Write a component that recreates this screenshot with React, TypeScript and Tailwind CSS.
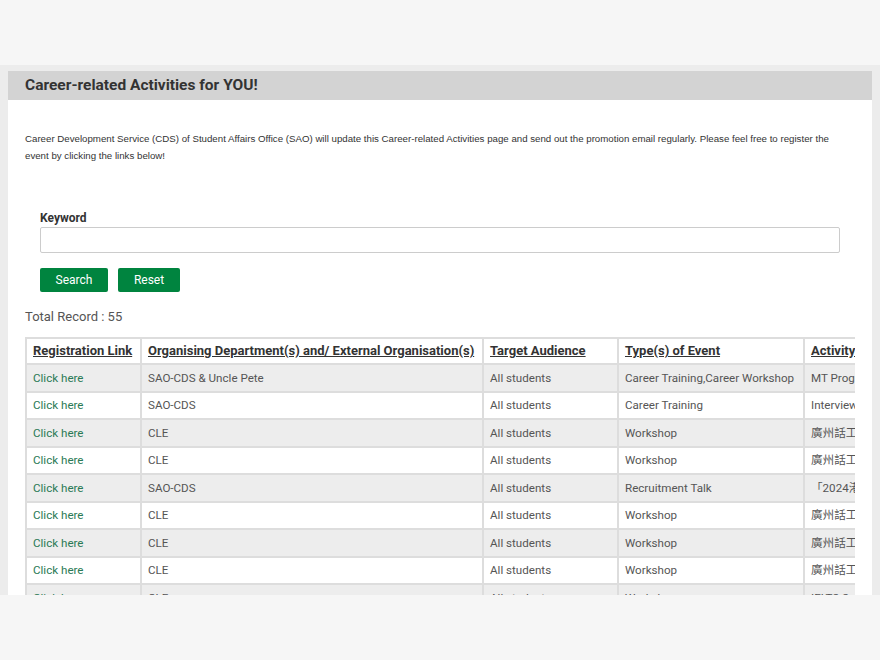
const ROWS = [
  { org: "SAO-CDS & Uncle Pete", aud: "All students", type: "Career Training,Career Workshop", act: "MT Programme Workshop" },
  { org: "SAO-CDS", aud: "All students", type: "Career Training", act: "Interview Skills Training" },
  { org: "CLE", aud: "All students", type: "Workshop", act: "廣州話工作坊" },
  { org: "CLE", aud: "All students", type: "Workshop", act: "廣州話工作坊" },
  { org: "SAO-CDS", aud: "All students", type: "Recruitment Talk", act: "「2024港澳招聘會」" },
  { org: "CLE", aud: "All students", type: "Workshop", act: "廣州話工作坊" },
  { org: "CLE", aud: "All students", type: "Workshop", act: "廣州話工作坊" },
  { org: "CLE", aud: "All students", type: "Workshop", act: "廣州話工作坊" },
  { org: "CLE", aud: "All students", type: "Workshop", act: "IELTS Speaking Workshop" },
];

const HEADS = [
  { label: "Registration Link", w: "w-[115px]" },
  { label: "Organising Department(s) and/ External Organisation(s)", w: "w-[342px]" },
  { label: "Target Audience", w: "w-[135px]" },
  { label: "Type(s) of Event", w: "w-[186px]" },
  { label: "Activity Name", w: "w-[220px]" },
];

export default function App() {
  return (
    <div className="h-[660px] bg-[#f6f6f6] pt-[65px] font-[family-name:Roboto,sans-serif]">
      <div className="h-[530px] overflow-hidden bg-[#ececec] px-2 pt-[6px]">
        <div className="min-h-[600px] bg-white">
          <div className="flex h-[29px] items-center bg-[#d3d3d3] px-[17px]">
            <h2 className="text-[15.5px] font-bold text-[#333]">Career-related Activities for YOU!</h2>
          </div>

          <div className="px-[17px]">
            <p className="mt-[30px] font-[family-name:Liberation_Sans,Arial,sans-serif] text-[9.7px] leading-[17px] text-[#333]">
              Career Development Service (CDS) of Student Affairs Office (SAO) will update this Career-related Activities page and send out the promotion email regularly. Please feel free to register the event by clicking the links below!
            </p>

            <div className="mt-[46px] pl-[15px] pr-[15px]">
              <label className="block text-[12px] font-bold leading-[16px] text-[#333]">Keyword</label>
              <input
                type="text"
                className="mt-[1px] block h-[26px] w-full rounded-[2px] border border-[#cccccc] bg-white px-2 text-[12px] outline-none"
              />
              <div className="mt-[15px] flex gap-[10px]">
                <button className="h-[24px] w-[68px] rounded-[2px] bg-[#00843f] text-[12px] text-white">Search</button>
                <button className="h-[24px] w-[62px] rounded-[2px] bg-[#00843f] text-[12px] text-white">Reset</button>
              </div>
            </div>

            <div className="mt-[17px] text-[13px] leading-[16px] text-[#555]">Total Record : 55</div>

            <div className="mt-[12px] overflow-hidden">
              <table className="w-max table-fixed border-collapse text-[11.6px] leading-[14px]">
                <thead>
                  <tr className="h-[26px] bg-white">
                    {HEADS.map((h) => (
                      <th
                        key={h.label}
                        className={`${h.w} whitespace-nowrap border-2 border-[#dddddd] px-[6px] text-left text-[13px] font-bold text-[#333] underline`}
                      >
                        {h.label}
                      </th>
                    ))}
                  </tr>
                </thead>
                <tbody>
                  {ROWS.map((r, i) => (
                    <tr key={i} className={`h-[27.5px] ${i % 2 === 0 ? "bg-[#ededed]" : "bg-white"}`}>
                      <td className="border-2 border-[#dddddd] px-[6px] text-[#2a7a55]">Click here</td>
                      <td className="border-2 border-[#dddddd] px-[6px] text-[#555]">{r.org}</td>
                      <td className="border-2 border-[#dddddd] px-[6px] text-[#555]">{r.aud}</td>
                      <td className="whitespace-nowrap border-2 border-[#dddddd] px-[6px] text-[#555]">{r.type}</td>
                      <td className="whitespace-nowrap border-2 border-[#dddddd] px-[6px] font-[family-name:Roboto,'Noto_Sans_CJK_TC',sans-serif] text-[#555]">
                        {r.act}
                      </td>
                    </tr>
                  ))}
                </tbody>
              </table>
            </div>
          </div>
        </div>
      </div>
    </div>
  );
}
